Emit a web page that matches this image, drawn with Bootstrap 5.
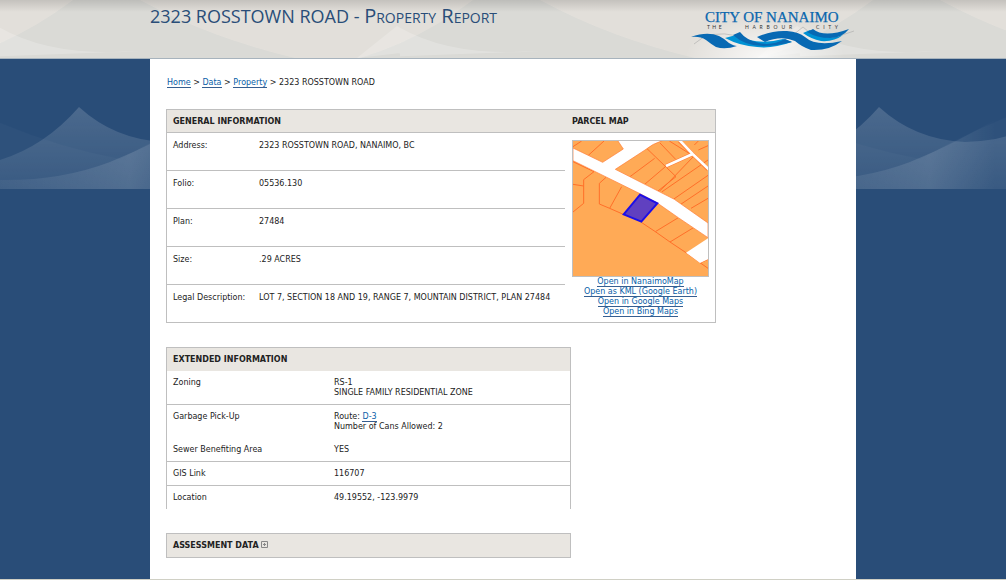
<!DOCTYPE html>
<html lang="en">
<head>
<meta charset="utf-8">
<meta name="viewport" content="width=device-width, initial-scale=1">
<title>2323 ROSSTOWN ROAD - Property Report</title>
<link rel="stylesheet" href="https://cdn.jsdelivr.net/npm/bootstrap@5.3.0/dist/css/bootstrap.min.css">
<style>
  body {
    font: 8px/10px "DejaVu Sans", Verdana, sans-serif;
    color: #222;
    background: #294d78 url("data:image/svg+xml,%3Csvg xmlns='http://www.w3.org/2000/svg' width='400' height='83'%3E%3Cdefs%3E%3ClinearGradient id='a' x2='0' y2='1'%3E%3Cstop stop-color='%23fff' stop-opacity='.16'/%3E%3Cstop offset='1' stop-color='%23fff' stop-opacity='.05'/%3E%3C/linearGradient%3E%3ClinearGradient id='b'%3E%3Cstop stop-color='%23fff' stop-opacity='.04'/%3E%3Cstop offset='.5' stop-color='%23fff' stop-opacity='.12'/%3E%3Cstop offset='.75' stop-color='%23fff' stop-opacity='0'/%3E%3C/linearGradient%3E%3C/defs%3E%3Cpath d='M0 17Q60 42 120 53Q170 25 230 2V84H0Z' fill='%23fff' fill-opacity='.025'/%3E%3Cpath d='M0 54Q45 40 79 1Q115 34 165 36Q200 35 225 24L260 84H0Z' fill='url(%23a)'/%3E%3Cpath d='M0 74Q60 75 110 56Q155 38 205 8L260 84H0Z' fill='url(%23b)'/%3E%3C/svg%3E") 0 106px repeat-x;
  }
  a { color: #0860a8; text-decoration: none; border-bottom: 1px solid #355e91; }
  .page-width { max-width: 706px; }
  .masthead {
    height: 59px;
    border-bottom: 1px solid #a7b3bd;
    background: linear-gradient(#0002, #0000 12px), url("data:image/svg+xml,%3Csvg xmlns='http://www.w3.org/2000/svg' width='400' height='58'%3E%3Cpath d='M-40 58Q20 40 73 0H140Q210 38 295 58ZM360 58Q420 40 473 0H540V58Z' fill='%23dadad6'/%3E%3Cpath d='M357 58L397 26Q450 58 540 53H400ZM-43 58L-3 26Q50 58 140 51Z' fill='%23fff' fill-opacity='.2'/%3E%3C/svg%3E") #e2dfda 0 0 repeat-x;
  }
  .report-title { font: 18px/24px "Open Sans", "Trebuchet MS", sans-serif; color: #294d78; }
  .report-title .kind { font-size: 20px; font-variant: small-caps; }
  .logo-glow { background: radial-gradient(ellipse 80px 40px at 48% 100%, #fffc, #fff0); }
  .report-body { padding: 16px 16px 21px; }
  .crumbs { padding: 3px 1px 0; margin-bottom: 21px; }
  .report-table { border: 1px solid #bfbfbf; border-collapse: separate; border-spacing: 0; }
  .report-table th { background: #e9e6e1; padding: 7px 6px 6px; text-transform: uppercase; }
  .report-table td { padding: 8px 6px 5px; vertical-align: top; border-bottom: 1px solid #bfbfbf; }
  .general { width: 550px; max-width: 100%; }
  .general thead th { padding-bottom: 5px; border-bottom: 1px solid #bfbfbf; }
  .general thead th:last-child { padding-left: 7px; }
  .general tbody tr { height: 38px; }
  .general tbody tr:last-child { height: 37px; }
  .general .parcel { padding: 7px 6px 5px 7px; }
  .general tr:last-child td, .general .parcel, .details .joined td, .details tr:last-child td { border-bottom: 0; }
  .details { width: 405px; max-width: 100%; }
  .details td { padding: 7px 6px 6px; }
  .extended { border-bottom: 0; }
  .parcel-map { border: 1px solid #bfbfbf; width: 137px; height: 137px; }
  .toggle { width: 7px; height: 7px; }
  .page-foot { border-top: 1px solid #d0d0c5; }
</style>
</head>
<body>
<header class="masthead">
  <div class="page-width mx-auto d-flex justify-content-between h-100">
    <h1 class="report-title mb-0 pt-1">2323 ROSSTOWN ROAD - <span class="kind">Property Report</span></h1>
    <svg class="logo-glow" width="175" height="58" viewBox="681 0 175 58" role="img" aria-label="City of Nanaimo, the harbour city">
      <text x="705" y="22" font-family="Liberation Serif, serif" font-size="15" fill="#0b67ae" stroke="#0b67ae" stroke-width=".25">CITY OF NANAIMO</text>
      <g font-family="Lato, sans-serif" font-size="5" fill="#333">
        <text x="707" y="29">T&#160; H&#160; E</text>
        <text x="745" y="29">H&#160; &#160;A&#160; &#160;R&#160; &#160;B&#160; &#160;O&#160; &#160;U&#160; &#160;R</text>
        <text x="816" y="29">C&#160; &#160;I&#160; &#160;T&#160; &#160;Y</text>
      </g>
      <g fill="none" stroke="#aaa" stroke-width=".6"><path d="M694 44Q709 29 738 36M793 35L803 27Q820 44 854 31"/></g>
      <path fill="#0092d4" d="M725 38L736 35Q757 46 783 39L792 42Q772 49 757 47Q740 46 725 38ZM803 33L810 30Q826 42 843 35Q834 42 821 41Q811 39 803 33Z"/>
      <path fill="#0869b3" d="M691 37Q707 31 719 36Q725 39 729 43Q734 46 737 46Q725 50 716 47Q711 44 706 40Q700 36 691 37ZM733 35L740 32Q746 40 759 43Q772 46 785 39L792 42Q776 46 763 46Q745 46 733 35ZM757 37Q773 30 787 31Q799 32 805 37Q816 47 842 41Q829 51 811 50Q802 47 795 41Q781 35 765 42ZM807 32L813 29Q824 38 849 29Q842 38 830 38Q817 38 807 32Z"/>
    </svg>
  </div>
</header>

<main class="page-width report-body mx-auto bg-white">
  <nav class="crumbs" aria-label="Breadcrumb">
    <a href="#">Home</a> &gt; <a href="#">Data</a> &gt; <a href="#">Property</a> &gt; 2323 ROSSTOWN ROAD
  </nav>

  <table class="report-table general mb-4">
    <colgroup><col style="width:86px"><col><col style="width:150px"></colgroup>
    <thead>
      <tr><th colspan="2">General Information</th><th>Parcel Map</th></tr>
    </thead>
    <tbody>
      <tr>
        <td>Address:</td><td>2323 ROSSTOWN ROAD, NANAIMO, BC</td>
        <td class="parcel text-center" rowspan="5">
          <svg class="parcel-map d-block" viewBox="39 33 405 405" role="img" aria-label="Parcel map">
            <path fill="#ffaa56" d="M39 33H444V438H39Z"/>
            <g fill="none" stroke="#ff6f29" stroke-width="3">
              <path d="M39 50L65 33M85 76L132 33M39 95L102 125L71 149V220L39 246M39 163L71 168M138 142L118 160V222L149 235L190 253M185 170L149 235M244 277L286 305L330 336L378 368L444 415M286 305L355 263M330 336L402 292M420 399L444 388M261 56L348 140L290 186M210 140L284 85M254 163L315 111M300 39L347 88M328 33L392 73L320 110M403 45L415 33M415 60L444 47M298 184L328 155L400 80M305 186L444 90M340 208L444 136M362 223L444 168M393 235L444 205"/>
            </g>
            <path fill="#fff" stroke="#ff7a34" stroke-width="2" d="M172 30L190 57L128 97L39 54V92L240 191L292 219L355 263L444 323V279L343 208L166 118L255 60Q275 42 312 30Z"/>
            <path fill="#fff" d="M378 368L444 325V388L420 399Z"/>
            <path fill="none" stroke="#ff7a34" stroke-width="11" d="M358 33L398 72L444 118M398 72L318 108"/>
            <path fill="none" stroke="#fff" stroke-width="8" d="M358 30L398 72L446 118M398 72L318 108"/>
            <path fill="#6040c0" stroke="#1c0ee8" stroke-width="6" d="M240 194L292 220L244 275L191 253Z"/>
          </svg>
          <div><a href="#">Open in NanaimoMap</a></div>
          <div><a href="#">Open as KML (Google Earth)</a></div>
          <div><a href="#">Open in Google Maps</a></div>
          <div><a href="#">Open in Bing Maps</a></div>
        </td>
      </tr>
      <tr><td>Folio:</td><td>05536.130</td></tr>
      <tr><td>Plan:</td><td>27484</td></tr>
      <tr><td>Size:</td><td>.29 ACRES</td></tr>
      <tr><td class="text-nowrap">Legal Description:</td><td class="text-nowrap">LOT 7, SECTION 18 AND 19, RANGE 7, MOUNTAIN DISTRICT, PLAN 27484</td></tr>
    </tbody>
  </table>

  <table class="report-table details extended mb-4">
    <colgroup><col style="width:161px"><col></colgroup>
    <thead><tr><th colspan="2">Extended Information</th></tr></thead>
    <tbody>
      <tr><td>Zoning</td><td>RS-1<br>SINGLE FAMILY RESIDENTIAL ZONE</td></tr>
      <tr class="joined"><td>Garbage Pick-Up</td><td>Route: <a href="#">D-3</a><br>Number of Cans Allowed: 2</td></tr>
      <tr><td>Sewer Benefiting Area</td><td>YES</td></tr>
      <tr><td>GIS Link</td><td>116707</td></tr>
      <tr><td>Location</td><td>49.19552, -123.9979</td></tr>
    </tbody>
  </table>

  <table class="report-table details mb-0">
    <thead><tr><th>Assessment Data
      <button type="button" class="toggle border-0 p-0 bg-transparent d-inline-flex" aria-label="Expand assessment data">
        <svg width="7" height="7" viewBox="0 0 7 7" fill="none" stroke="#888"><path d="M.5.5h6v6h-6zM3.5 2v3M2 3.5h3"/></svg>
      </button></th></tr></thead>
  </table>
</main>
<footer class="page-foot"></footer>
<script src="https://cdn.jsdelivr.net/npm/bootstrap@5.3.0/dist/js/bootstrap.bundle.min.js"></script>
</body>
</html>
